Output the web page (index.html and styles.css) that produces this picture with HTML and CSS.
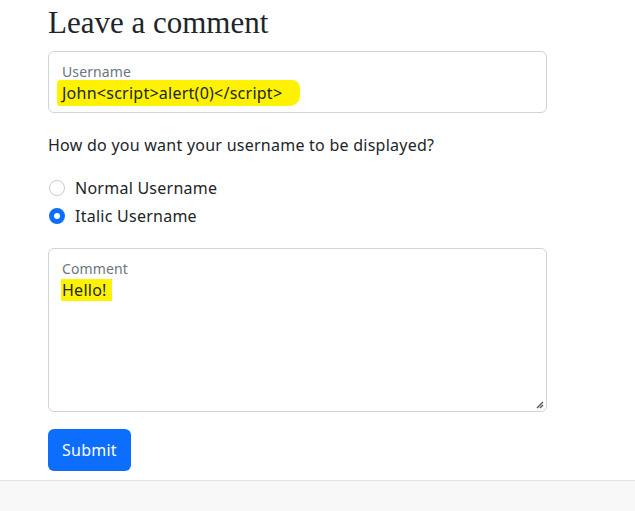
FILE: index.html
```
<!DOCTYPE html>
<html>
<head>
<meta charset="utf-8">
<link rel="stylesheet" href="styles.css">
</head>
<body>
<main class="page">
  <h2 class="title">Leave a comment</h2>
  <div class="field field-input">
    <label class="field-label">Username</label>
    <div class="field-value"><span class="marker">John&lt;script&gt;alert(0)&lt;/script&gt;</span></div>
  </div>
  <p class="question">How do you want your username to be displayed?</p>
  <div class="radios">
    <label class="radio"><span class="dot"></span>Normal Username</label>
    <label class="radio"><span class="dot checked"></span>Italic Username</label>
  </div>
  <div class="field field-area">
    <label class="field-label">Comment</label>
    <div class="field-value"><span class="hl">Hello!</span></div>
    <svg class="grip" width="8" height="8" viewBox="0 0 8 8"><path d="M7 1 L1 7 M7 4 L4 7" stroke="#555" stroke-width="1.4"/></svg>
  </div>
  <button class="btn">Submit</button>
</main>
<footer class="footer"></footer>
</body>
</html>
```
FILE: styles.css
```
html, body { margin: 0; padding: 0; background: #fff; }
body { font-family: "Noto Sans", sans-serif; color: #212529; font-size: 16px; letter-spacing: 0.25px; height: 511px; overflow: hidden; }
.page { padding: 0 88px 0 48px; width: 499px; display: flex; flex-direction: column; }
.title { font-family: "Liberation Serif", serif; font-weight: normal; font-size: 31px; letter-spacing: 0; line-height: 38px; margin: 4px 0 9px 0; color: #212529; }
.field { border: 1px solid #ced4da; border-radius: 6px; box-sizing: border-box; position: relative; padding: 11px 13px; }
.field-input { height: 62px; }
.field-area { height: 164px; }
.field-label { display: block; font-size: 14px; color: #6c757d; line-height: 18px; letter-spacing: 0.1px; }
.field-value { line-height: 22px; margin-left: -5px; margin-top: 1px; }
.marker { background: #fff200; padding: 2px 18px 2px 5px; border-radius: 3px 8px 10px 3px; }
.hl { background: #fff200; padding: 0 5px 0 1px; margin-left: 4px; }
.question { margin: 21px 0 21px; line-height: 22px; }
.radios { display: flex; flex-direction: column; gap: 6px; margin-bottom: 21px; }
.radio { display: flex; align-items: center; gap: 10px; line-height: 22px; }
.dot { width: 16px; height: 16px; box-sizing: border-box; border: 1px solid #c6cbd0; border-radius: 50%; margin-left: 1px; }
.dot.checked { background: #fff; border: 5px solid #0d6efd; }
.grip { position: absolute; right: 2px; bottom: 2px; }
.btn { align-self: flex-start; margin-top: 17px; background: #0d6efd; color: #fff; border: none; border-radius: 6px; font-family: inherit; font-size: 16px; letter-spacing: 0.25px; padding: 0 14px; height: 42px; }
.footer { position: absolute; left: 0; right: 0; top: 480px; bottom: 0; background: #f8f8f8; border-top: 1px solid #e2e2e2; }
```
